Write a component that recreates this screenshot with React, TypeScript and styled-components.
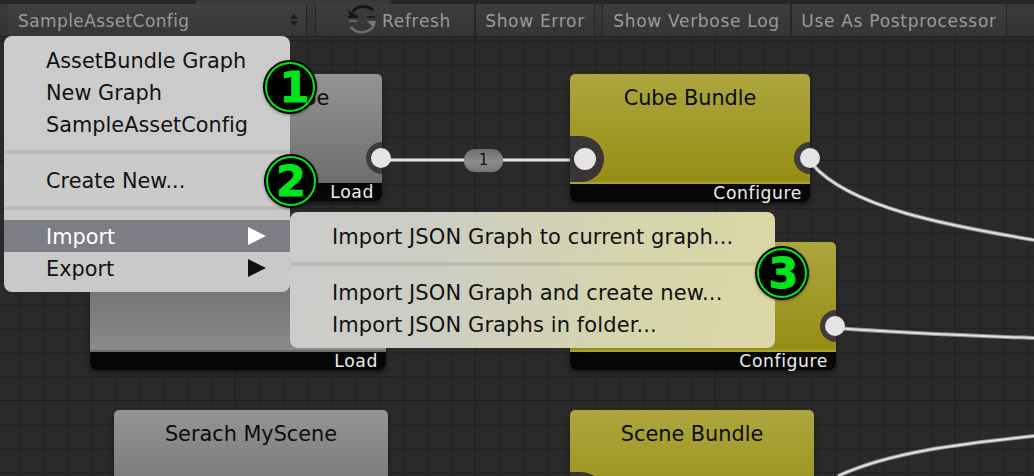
import React from "react";
import styled, { createGlobalStyle } from "styled-components";

const Global = createGlobalStyle`
  html, body { margin: 0; padding: 0; background: #282828; }
  * { box-sizing: border-box; }
`;

const Page = styled.div`
  position: relative;
  width: 1034px;
  height: 476px;
  overflow: hidden;
  display: flex;
  flex-direction: column;
  font-family: "DejaVu Sans", sans-serif;
`;

const TopStrip = styled.div`
  height: 4px;
  flex: none;
  background: linear-gradient(90deg, #272727 0 196px, #3a3a3a 196px 390px, #272727 390px);
`;

const Toolbar = styled.div`
  height: 33px;
  flex: none;
  display: flex;
  align-items: stretch;
  background: linear-gradient(#3a3a3a, #333);
  border-bottom: 1px solid #1f1f1f;
  color: #9a9a9a;
  font-size: 17px;
  letter-spacing: 0.7px;
`;

const Popup = styled.div`
  width: 299px;
  margin-left: 8px;
  padding: 2px 7px 0 10px;
  display: flex;
  align-items: center;
  justify-content: space-between;
  letter-spacing: 0.4px;
  background: linear-gradient(#404040, #363636);
  border-right: 1px solid #222;
`;

const Updown = styled.svg`
  width: 10px;
  height: 14px;
  margin-top: -2px;
`;

const ToolButton = styled.div<{ $w: number; $gap?: number; $start?: boolean }>`
  width: ${(p) => p.$w}px;
  margin-left: ${(p) => p.$gap ?? 0}px;
  padding: 2px 0 0 ${(p) => (p.$start ? 31 : 0)}px;
  display: flex;
  align-items: center;
  justify-content: ${(p) => (p.$start ? "flex-start" : "center")};
  gap: 5px;
  border-left: 1px solid #262626;
  border-right: 1px solid #262626;
  background: linear-gradient(#3d3d3d, #353535);
  white-space: nowrap;
`;

const RefreshIcon = styled.svg`
  width: 30px;
  height: 30px;
  margin-top: -4px;
`;

const Canvas = styled.div`
  position: relative;
  flex: 1;
  background-color: #2a2a2a;
  background-image:
    linear-gradient(#1d1d1d 1px, transparent 1px),
    linear-gradient(90deg, #1d1d1d 1px, transparent 1px),
    linear-gradient(#232323 1px, transparent 1px),
    linear-gradient(90deg, #232323 1px, transparent 1px);
  background-size: 240px 240px, 240px 240px, 24px 24px, 24px 24px;
  background-position: 0 123px, 235px 0, 0 3px, 19px 0;
`;

const Wires = styled.svg`
  position: absolute;
  left: 0;
  top: -37px;
  width: 1034px;
  height: 476px;
`;

const Node = styled.div<{ $x: number; $y: number; $w: number; $h: number }>`
  position: absolute;
  left: ${(p) => p.$x}px;
  top: ${(p) => p.$y - 37}px;
  width: ${(p) => p.$w}px;
  height: ${(p) => p.$h}px;
  border-radius: 5px 5px 8px 8px;
  background: #060606;
  box-shadow: 0 3px 5px rgba(0, 0, 0, 0.45);
`;

const tones = {
  gold: "linear-gradient(#aca63e, #968d14)",
  grey: "linear-gradient(#949494, #6e6e6e)",
  greyRising: "linear-gradient(#6a6a6a 0%, #747474 45%, #8a8a8a 100%)",
};

const NodeBody = styled.div<{ $tone: keyof typeof tones }>`
  position: absolute;
  inset: 0 0 18px 0;
  overflow: hidden;
  border-radius: 5px 5px 0 0;
  text-align: center;
  padding-top: 12px;
  font-size: 20.8px;
  line-height: 24px;
  color: #0c0c08;
  background: ${(p) => tones[p.$tone]};
  border-bottom: 2px solid ${(p) => (p.$tone === "gold" ? "#a9a13a" : "#6c6c6c")};
`;

const NodeFooter = styled.div`
  position: absolute;
  right: 8px;
  bottom: -1px;
  height: 19px;
  font-size: 17.2px;
  line-height: 19px;
  letter-spacing: 0.6px;
  color: #eee;
`;

const InSocket = styled.div<{ $y: number }>`
  position: absolute;
  left: 0;
  top: ${(p) => p.$y}px;
  width: 34px;
  height: 46px;
  background: #3b3436;
  border-radius: 0 23px 23px 0;
`;

const OutRing = styled.div<{ $y: number }>`
  position: absolute;
  right: -16px;
  top: ${(p) => p.$y}px;
  width: 32px;
  height: 32px;
  border-radius: 50%;
  background: #3f3a3c;
`;

const Dot = styled.div<{ $x: number; $y: number; $r: number }>`
  position: absolute;
  left: ${(p) => p.$x - p.$r}px;
  top: ${(p) => p.$y - 37 - p.$r}px;
  width: ${(p) => p.$r * 2}px;
  height: ${(p) => p.$r * 2}px;
  border-radius: 50%;
  background: #e4e4e4;
`;

const Pill = styled.div`
  position: absolute;
  left: 464px;
  top: 112px;
  width: 39px;
  height: 23px;
  border-radius: 11px;
  background: linear-gradient(#6d6d6d, #8d8d8d 55%, #757575);
  text-align: center;
  font-size: 15px;
  line-height: 23px;
  color: #111;
`;

const MenuPanel = styled.div<{ $x: number; $y: number; $w: number; $tint?: boolean }>`
  position: absolute;
  left: ${(p) => p.$x}px;
  top: ${(p) => p.$y}px;
  width: ${(p) => p.$w}px;
  padding: 8px 0;
  border-radius: 8px;
  background: ${(p) =>
    p.$tint
      ? "linear-gradient(100deg, #cbcbcb 0%, #cdcdc4 30%, #d6d5ac 70%, #dad8a6 100%)"
      : "linear-gradient(#cccccc, #c9c9c9)"};
  color: #111;
  font-size: ${(p) => (p.$tint ? 21 : 20.8)}px;
  letter-spacing: ${(p) => (p.$tint ? 0.1 : 0.03)}px;
`;

const MenuItem = styled.div<{ $active?: boolean }>`
  display: flex;
  align-items: center;
  justify-content: space-between;
  height: 32px;
  padding: 2px 24px 0 42px;
  white-space: nowrap;
  background: ${(p) => (p.$active ? "#7d7d85" : "transparent")};
  color: ${(p) => (p.$active ? "#fff" : "#111")};
`;

const MenuRule = styled.div`
  height: 4px;
  margin: 10px 0;
  background: rgba(0, 0, 0, 0.08);
`;

const Arrow = styled.svg`
  width: 18px;
  height: 20px;
  margin-top: -2px;
`;

const Badge = styled.div<{ $x: number; $y: number; $shift?: number }>`
  position: absolute;
  left: ${(p) => p.$x - 27}px;
  top: ${(p) => p.$y - 27}px;
  width: 54px;
  height: 54px;
  padding-left: ${(p) => p.$shift ?? 0}px;
  border-radius: 50%;
  background: #000;
  display: flex;
  align-items: center;
  justify-content: center;
  box-shadow: 0 1px 3px rgba(0, 0, 0, 0.4);
  color: #00e61a;
  font-family: "DejaVu Sans", sans-serif;
  font-weight: 700;
  font-size: 43px;
  line-height: 1;
  -webkit-text-stroke: 0.8px #00e61a;
  &::after {
    content: "";
    position: absolute;
    inset: 2px;
    border: 2px solid #00e61a;
    border-radius: 50%;
  }
`;

export default function App() {
  const wires = [
    "M380 160H570",
    "M812 164C850 208 950 226 1034 240",
    "M836 328C900 333 980 336 1034 338",
    "M838 476C890 452 960 444 1034 436",
  ];
  return (
    <Page>
      <Global />
      <TopStrip />
      <Toolbar>
        <Popup>
          SampleAssetConfig
          <Updown viewBox="0 0 10 14">
            <path d="M5 1 9 6H1zM5 13 1 8h8z" fill="#1d1d1d" />
          </Updown>
        </Popup>
        <ToolButton $w={160} $gap={8} $start>
          <RefreshIcon viewBox="0 0 30 30">
            <path d="M6 8C10 1 20 1 26 6" fill="none" stroke="#161616" strokeWidth="3" />
            <path d="M1 6 3 14H11V12z" fill="#161616" />
            <path d="M1 13H10M20 13H28" stroke="#161616" strokeWidth="1.6" />
            <path d="M4 23C9 30 20 30 26 23" fill="none" stroke="#6f6f6f" strokeWidth="2.6" />
            <path d="M20 17H29L27 24z" fill="#7a7a7a" />
            <path d="M2 17H10" stroke="#6f6f6f" strokeWidth="1.6" />
          </RefreshIcon>
          Refresh
        </ToolButton>
        <ToolButton $w={120}>Show Error</ToolButton>
        <ToolButton $w={189} $gap={7}>Show Verbose Log</ToolButton>
        <ToolButton $w={216}>Use As Postprocessor</ToolButton>
      </Toolbar>
      <Canvas>
        <Wires viewBox="0 0 1034 476">
          <g fill="none" stroke="#8f8f8f" strokeWidth="4">
            {wires.map((d) => <path key={d} d={d} />)}
          </g>
          <g fill="none" stroke="#e0e0e0" strokeWidth="2">
            {wires.map((d) => <path key={d} d={d} />)}
          </g>
        </Wires>

        <Node $x={114} $y={74} $w={268} $h={127}>
          <NodeBody $tone="grey">
            Serach MyCube
            <OutRing $y={68} />
          </NodeBody>
          <NodeFooter>Load</NodeFooter>
        </Node>
        <Node $x={570} $y={74} $w={240} $h={128}>
          <NodeBody $tone="gold">
            Cube Bundle
            <InSocket $y={62} />
            <OutRing $y={68} />
          </NodeBody>
          <NodeFooter>Configure</NodeFooter>
        </Node>
        <Node $x={90} $y={240} $w={296} $h={130}>
          <NodeBody $tone="greyRising">Serach MyPrefab</NodeBody>
          <NodeFooter>Load</NodeFooter>
        </Node>
        <Node $x={570} $y={242} $w={266} $h={128}>
          <NodeBody $tone="gold">
            <OutRing $y={68} />
          </NodeBody>
          <NodeFooter>Configure</NodeFooter>
        </Node>
        <Node $x={114} $y={410} $w={274} $h={130}>
          <NodeBody $tone="grey">Serach MyScene</NodeBody>
        </Node>
        <Node $x={570} $y={410} $w={244} $h={130}>
          <NodeBody $tone="gold">
            Scene Bundle
            <InSocket $y={62} />
          </NodeBody>
        </Node>

        <Dot $x={381} $y={158} $r={10} />
        <Dot $x={585} $y={159} $r={11} />
        <Dot $x={810} $y={158} $r={10} />
        <Dot $x={835} $y={326} $r={10} />
        <Pill>1</Pill>
      </Canvas>

      <MenuPanel $x={4} $y={36} $w={286}>
        <MenuItem>AssetBundle Graph</MenuItem>
        <MenuItem>New Graph</MenuItem>
        <MenuItem>SampleAssetConfig</MenuItem>
        <MenuRule />
        <MenuItem>Create New...</MenuItem>
        <MenuRule />
        <MenuItem $active>
          Import
          <Arrow viewBox="0 0 18 20"><path d="M0 1 18 10 0 19z" fill="#fff" /></Arrow>
        </MenuItem>
        <MenuItem>
          Export
          <Arrow viewBox="0 0 18 20"><path d="M0 1 18 10 0 19z" fill="#111" /></Arrow>
        </MenuItem>
      </MenuPanel>
      <MenuPanel $x={290} $y={212} $w={485} $tint>
        <MenuItem>Import JSON Graph to current graph...</MenuItem>
        <MenuRule />
        <MenuItem>Import JSON Graph and create new...</MenuItem>
        <MenuItem>Import JSON Graphs in folder...</MenuItem>
      </MenuPanel>

      <Badge $x={290} $y={87} $shift={9}>1</Badge>
      <Badge $x={291} $y={181}>2</Badge>
      <Badge $x={782} $y={273} $shift={3}>3</Badge>
    </Page>
  );
}
